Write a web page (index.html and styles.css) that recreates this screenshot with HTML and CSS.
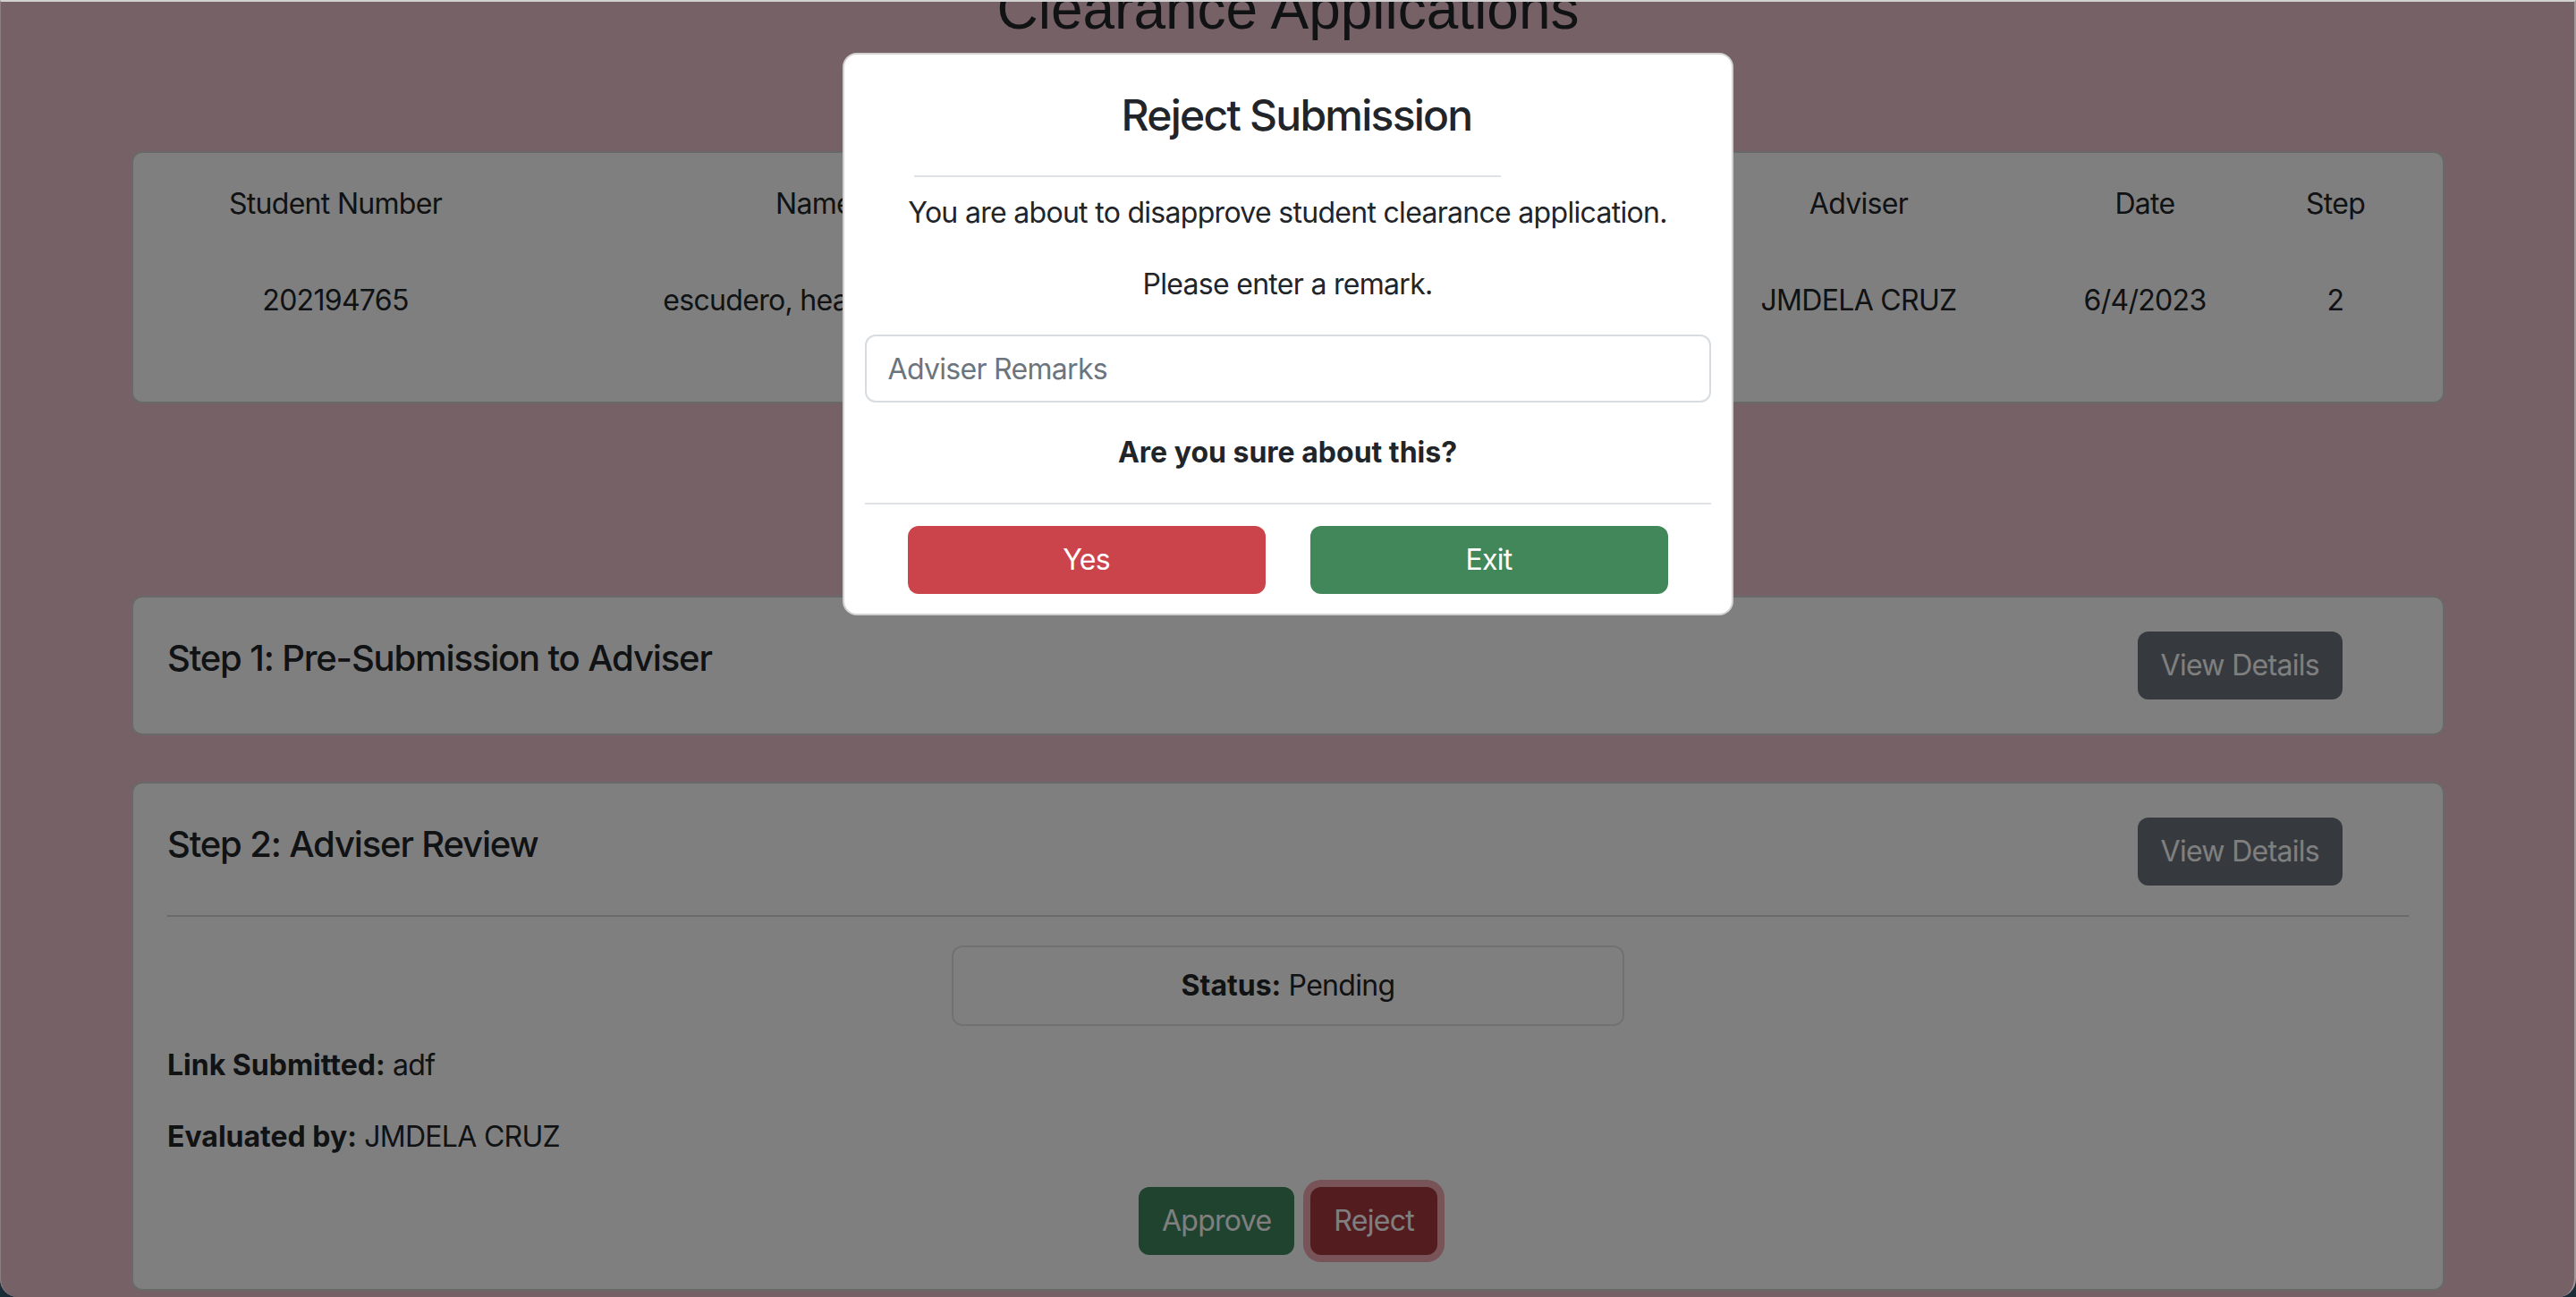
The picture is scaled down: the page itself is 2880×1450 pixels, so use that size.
FILE: index.html
```html
<!DOCTYPE html>
<html lang="en">
<head>
<meta charset="utf-8">
<title>Clearance Applications</title>
<link rel="stylesheet" href="styles.css">
</head>
<body>
<div class="window">
  <main class="page">
    <h1 class="page-title">Clearance Applications</h1>

    <section class="card summary">
      <div class="summary-grid">
        <div class="cell">Student Number</div>
        <div class="cell">Name</div>
        <div class="cell">Program</div>
        <div class="cell">Adviser</div>
        <div class="cell">Date</div>
        <div class="cell">Step</div>
        <div class="cell">202194765</div>
        <div class="cell">escudero, heart andrea</div>
        <div class="cell">BS Computer Science</div>
        <div class="cell">JMDELA CRUZ</div>
        <div class="cell">6/4/2023</div>
        <div class="cell">2</div>
      </div>
    </section>

    <section class="card step step-first">
      <div class="step-head">
        <h5 class="step-title">Step 1: Pre-Submission to Adviser</h5>
        <button class="btn btn-secondary btn-view">View Details</button>
      </div>
    </section>

    <section class="card step">
      <div class="step-head">
        <h5 class="step-title">Step 2: Adviser Review</h5>
        <button class="btn btn-secondary btn-view">View Details</button>
      </div>
      <hr class="step-rule">
      <div class="status-box"><strong>Status:</strong> Pending</div>
      <p class="info"><strong>Link Submitted:</strong> adf</p>
      <p class="info"><strong>Evaluated by:</strong> JMDELA CRUZ</p>
      <div class="actions">
        <button class="btn btn-success">Approve</button>
        <button class="btn btn-danger btn-focused">Reject</button>
      </div>
    </section>
  </main>

  <div class="backdrop"></div>

  <div class="modal">
    <h4 class="modal-title">Reject Submission</h4>
    <hr class="modal-rule">
    <p class="modal-text">You are about to disapprove student clearance application.</p>
    <p class="modal-text">Please enter a remark.</p>
    <input class="remark-input" type="text" placeholder="Adviser Remarks">
    <p class="modal-text modal-question">Are you sure about this?</p>
    <div class="modal-footer">
      <button class="btn btn-yes">Yes</button>
      <button class="btn btn-exit">Exit</button>
    </div>
  </div>
</div>
</body>
</html>
```

FILE: styles.css
```css
* {
  box-sizing: border-box;
}

html,
body {
  margin: 0;
  padding: 0;
}

body {
  background: #1b2d36;
  font-family: Inter, "Noto Sans", sans-serif;
  font-size: 32px;
  line-height: 48px;
  letter-spacing: -0.7px;
  color: #212529;
}

.window {
  position: relative;
  height: 1450px;
  overflow: hidden;
  background: #ecc2ce;
  border-top: 2px solid #d2d2d2;
  border-left: 1px solid #8c7f84;
  border-right: 2px solid #a3989c;
  border-radius: 0 0 20px 20px;
}

.page {
  padding: 0 145px 0 146px;
}

.page-title {
  margin: -30px 0 120px;
  font-family: "Liberation Sans", Arial, sans-serif;
  font-size: 64px;
  font-weight: 400;
  line-height: 77px;
  letter-spacing: 0;
  text-align: center;
  color: #212529;
}

.card {
  background: #fff;
  border: 2px solid rgba(0, 0, 0, 0.175);
  border-radius: 12px;
}

.summary {
  padding: 33px 50px 89px 0;
}

.summary-grid {
  display: grid;
  grid-template-columns: 452px 618px 682px 354px 286px 140px;
  row-gap: 60px;
  text-align: center;
}

.cell {
  white-space: nowrap;
}

.step {
  margin-top: 52px;
  padding: 38px;
}

.step-first {
  margin-top: 215px;
}

.step-head {
  display: flex;
  justify-content: space-between;
  align-items: flex-start;
}

.step-title {
  margin: 6px 0 0;
  font-size: 40px;
  font-weight: 500;
  line-height: 48px;
  letter-spacing: -1.15px;
}

.btn {
  font-family: inherit;
  font-size: 32px;
  line-height: 48px;
  letter-spacing: -0.7px;
  padding: 12px 24px;
  border: 2px solid transparent;
  border-radius: 12px;
  color: #fff;
  cursor: pointer;
}

.btn-secondary {
  background: #6c757d;
}

.btn-view {
  margin-right: 74px;
}

.step-rule {
  margin: 33px 0 32px;
  border: 0;
  border-top: 2px solid #d3d4d5;
}

.status-box {
  width: 30%;
  margin: 0 auto 20px;
  padding: 19px;
  border: 2px solid #dee2e6;
  border-radius: 12px;
  text-align: center;
}

.info {
  margin: 0 0 32px;
}

strong {
  font-weight: 700;
  letter-spacing: 0;
}

.actions {
  display: flex;
  justify-content: center;
  gap: 18px;
}

.btn-success {
  background: #3e865c;
}

.btn-danger {
  background: #a6383f;
}

.btn-focused {
  box-shadow: 0 0 0 8px rgba(225, 83, 97, 0.5);
}

.backdrop {
  position: absolute;
  inset: 0;
  background: rgba(0, 0, 0, 0.5);
}

.modal {
  position: absolute;
  top: 57px;
  left: 0;
  right: 0;
  margin: 0 auto;
  width: 996px;
  padding: 39px 23px 22px;
  background: #fff;
  border: 2px solid rgba(0, 0, 0, 0.175);
  border-radius: 16px;
}

.modal-title {
  margin: 0;
  padding-left: 20px;
  font-size: 48px;
  font-weight: 500;
  line-height: 58px;
  letter-spacing: -1.75px;
  text-align: center;
}

.modal-rule {
  margin: 38px 0 16px 55px;
  width: 656px;
  border: 0;
  border-top: 2px solid #dee2e6;
}

.modal-text {
  margin: 0 0 32px;
  text-align: center;
}

.modal-question {
  font-weight: 700;
  letter-spacing: 0;
}

.remark-input {
  display: block;
  width: 100%;
  height: 76px;
  margin: 0 0 32px;
  padding: 12px 24px;
  font-family: inherit;
  font-size: 32px;
  line-height: 48px;
  letter-spacing: -0.7px;
  color: #212529;
  border: 2px solid #d8dce0;
  border-radius: 12px;
  outline: none;
}

.remark-input::placeholder {
  color: #6c757d;
}

.modal-footer {
  display: flex;
  justify-content: center;
  gap: 50px;
  padding-top: 24px;
  border-top: 2px solid #dee2e6;
}

.btn-yes,
.btn-exit {
  width: 400px;
}

.btn-yes {
  background: #cc444b;
}

.btn-exit {
  background: #41875a;
}
```
